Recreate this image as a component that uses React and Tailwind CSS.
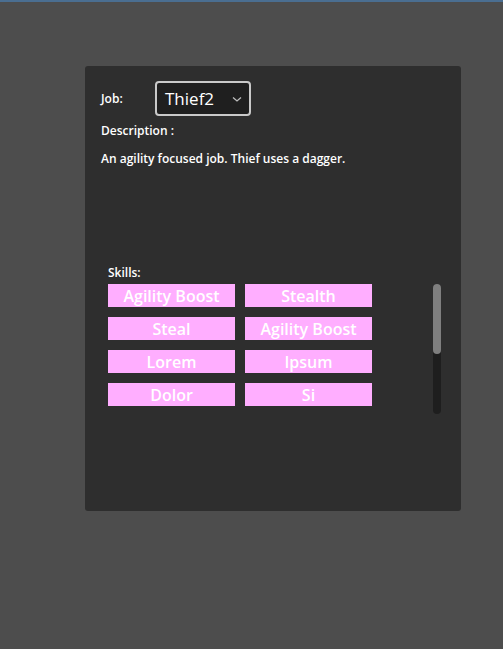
import React from "react";

const skills = [
  "Agility Boost",
  "Stealth",
  "Steal",
  "Agility Boost",
  "Lorem",
  "Ipsum",
  "Dolor",
  "Si",
];

export default function App() {
  return (
    <div
      className="w-[503px] h-[649px] bg-[#4d4d4d] overflow-hidden text-white font-semibold"
      style={{ fontFamily: '"Open Sans", "Noto Sans", sans-serif' }}
    >
      <div className="h-[2px] bg-[#4a6e91]" />
      <div className="ml-[85px] mt-[64px] w-[376px] h-[445px] bg-[#2e2e2e] rounded-[3px] pt-[15px]">
        <div className="flex items-center pl-[16px]">
          <span className="text-[12px] w-[54px] pt-[1px]">Job:</span>
          <div className="w-[96px] h-[35px] border-2 border-[#c9c9c9] rounded-[4px] bg-[#1f1f1f] flex items-center pl-[8px] pr-[6px] justify-between">
            <span className="text-[17px] leading-none font-normal">Thief2</span>
            <svg width="12" height="8" viewBox="0 0 12 8" fill="none">
              <path d="M2 2.5 L6 6 L10 2.5" stroke="#bdbdbd" strokeWidth="1.3" />
            </svg>
          </div>
        </div>
        <div className="pl-[16px] mt-[6px] text-[12px] leading-[18px]">Description :</div>
        <div className="pl-[16px] mt-[10px] text-[12px] leading-[18px]">
          An agility focused job. Thief uses a dagger.
        </div>
        <div className="pl-[23px] mt-[96px] text-[12px] leading-[18px]">Skills:</div>
        <div className="flex pl-[23px] mt-[2px]">
          <div className="grid grid-cols-[127px_127px] gap-x-[10px] gap-y-[10px] content-start">
            {skills.map((s, i) => (
              <div
                key={i}
                className="h-[23px] bg-[#ffaeff] flex items-center justify-center text-[16px] leading-none font-semibold"
              >
                {s}
              </div>
            ))}
          </div>
          <div className="ml-[61px] w-[8px] h-[130px] rounded-full bg-[#1e1e1e] relative">
            <div className="w-[8px] h-[70px] rounded-full bg-[#7f7f7f]" />
          </div>
        </div>
      </div>
    </div>
  );
}
